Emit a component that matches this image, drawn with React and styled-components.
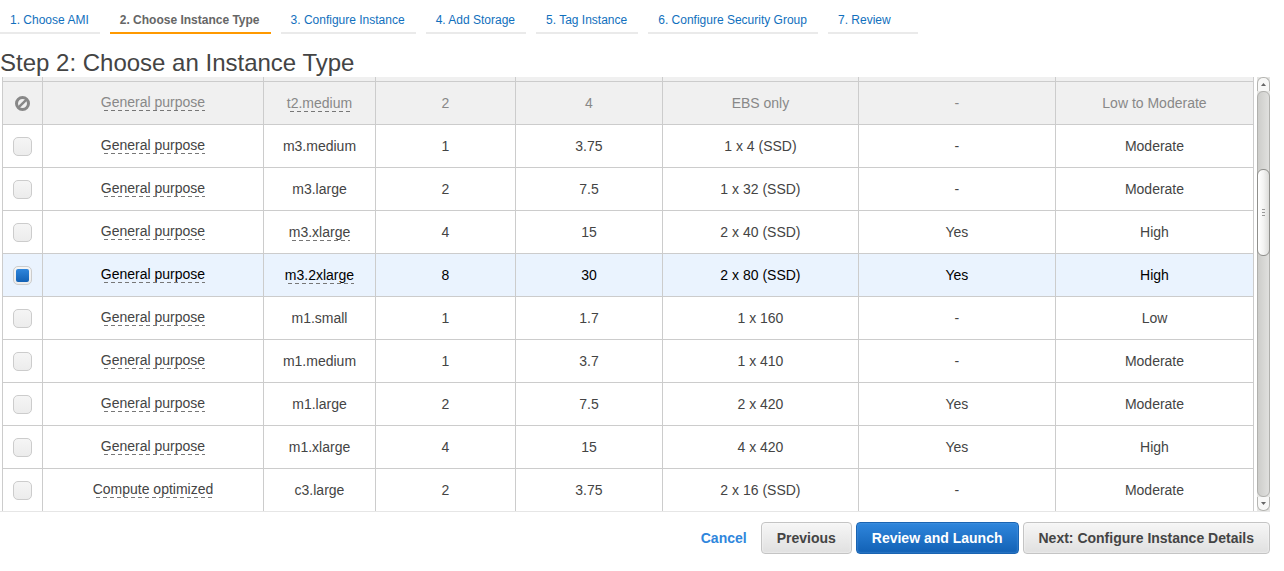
import React from 'react';
import styled, { createGlobalStyle, css } from 'styled-components';

const GlobalStyle = createGlobalStyle`
  * {
    box-sizing: border-box;
  }

  body {
    margin: 0;
    background: #fff;
    color: #444;
    font-family: "Liberation Sans", Arial, Helvetica, sans-serif;
    font-size: 14px;
  }
`;

const Page = styled.main`
  padding-right: 14px;
`;

const Steps = styled.nav`
  display: flex;
  gap: 10px;
  padding-top: 8px;
`;

const Step = styled.a`
  min-width: 90px;
  padding: 5px 11px 5px 10px;
  border-bottom: 2px solid ${props => (props.$current ? '#ff9900' : '#eaeaea')};
  color: ${props => (props.$current ? '#666' : '#1170bd')};
  font-size: 12px;
  font-weight: ${props => (props.$current ? 'bold' : 'normal')};
  line-height: 14px;
  text-decoration: none;
  white-space: nowrap;
`;

const Title = styled.h1`
  margin: 0;
  padding-top: 15px;
  font-size: 24px;
  font-weight: normal;
  line-height: 28px;
`;

const Pane = styled.section`
  display: flex;
  gap: 3px;
  padding-left: 2px;
  border-bottom: 1px solid #e6e6e6;
`;

const Table = styled.table`
  flex: 1;
  width: 0;
  table-layout: fixed;
  border-collapse: separate;
  border-spacing: 0;
  border-left: 1px solid #ccc;
`;

const Cell = styled.td`
  height: 43px;
  padding: 0;
  border-right: 1px solid #ccc;
  border-bottom: 1px solid #ccc;
  line-height: 16px;
  text-align: center;
  vertical-align: middle;
`;

const FamilyCell = styled(Cell)`
  padding-bottom: 2px;
`;

const Row = styled.tr`
  ${props => props.$disabled && css`
    background: #f0f0f0;
    color: #888;
  `}
  ${props => props.$selected && css`
    background: #eaf3fe;
    color: #000;
  `}

  &:last-child ${Cell} {
    height: 42px;
    border-bottom: 0;
  }
`;

const EdgeCell = styled(Cell)`
  height: 5px;
`;

const Hint = styled.span`
  display: inline-block;
  padding-bottom: 1px;
  background: repeating-linear-gradient(90deg, transparent 0 3px, #777 3px 7px) bottom / 100% 1px no-repeat;
`;

const Check = styled.input`
  appearance: none;
  display: block;
  width: 19px;
  height: 19px;
  margin: 0 auto;
  padding: 2px;
  border: 1px solid #ccc;
  border-radius: 5px;
  background: linear-gradient(#f5f5f5, #ececec);

  &:checked::before {
    content: "";
    display: block;
    height: 13px;
    border-radius: 2px;
    background: linear-gradient(#2f86dc, #1261b5);
  }
`;

const BanIcon = styled.svg`
  display: block;
  margin: 0 auto;
`;

const Scrollbar = styled.div`
  display: flex;
  flex-direction: column;
  width: 13px;
  background: #e6e6e4;
`;

const ArrowButton = styled.button`
  display: flex;
  align-items: center;
  justify-content: center;
  height: 14px;
  padding: 0;
  border: 1px solid #b5b5b2;
  border-width: ${props => (props.$down ? '0 1px 1px' : '1px 1px 0')};
  border-radius: ${props => (props.$down ? '0 0 6px 6px' : '6px 6px 0 0')};
  background: #f8f8f7;
`;

const Groove = styled.div`
  flex: 1;
  display: flex;
  flex-direction: column;
  border: 1px solid #b0b0ad;
  border-radius: 6px;
  background: linear-gradient(90deg, #cdcdca, #e0e0de);
`;

const Track = styled.div`
  flex: ${props => props.$share};
`;

const Thumb = styled.div`
  display: flex;
  flex-direction: column;
  align-items: center;
  justify-content: center;
  gap: 2px;
  height: 87px;
  margin: 0 -1px;
  border: 1px solid #8f8f8c;
  border-radius: 6px;
  background: linear-gradient(90deg, #fff, #f3f3f2 50%, #dcdcda);
`;

const Grip = styled.span`
  width: 3px;
  height: 1px;
  background: #999;
`;

const Footer = styled.footer`
  display: flex;
  align-items: center;
  justify-content: flex-end;
  gap: 4px;
  padding-top: 10px;
`;

const Cancel = styled.a`
  margin-right: 10px;
  color: #2f86dc;
  font-weight: bold;
  text-decoration: none;
`;

const Button = styled.button`
  height: 32px;
  padding: 0 15px;
  border: 1px solid ${props => (props.$primary ? '#1a64b2' : '#c4c4c4')};
  border-radius: 4px;
  background: ${props => (props.$primary
    ? 'linear-gradient(#2f86dc, #1261b5)'
    : 'linear-gradient(#f6f6f6, #e0e0e0)')};
  box-shadow: inset 0 0 2px ${props => (props.$primary ? '#5ba0e4' : '#fff')};
  color: ${props => (props.$primary ? '#fff' : '#444')};
  font: bold 14px "Liberation Sans", Arial, Helvetica, sans-serif;
`;

const steps = [
  '1. Choose AMI',
  '2. Choose Instance Type',
  '3. Configure Instance',
  '4. Add Storage',
  '5. Tag Instance',
  '6. Configure Security Group',
  '7. Review'
];

const columns = [40, 221, 112, 140, 147, 196, 197, 198];
const total = columns.reduce((sum, width) => sum + width, 0);

const instances = [
  { family: 'General purpose', type: 't2.medium', cpus: '2', memory: '4', storage: 'EBS only', ebs: '-', network: 'Low to Moderate', hint: true, disabled: true },
  { family: 'General purpose', type: 'm3.medium', cpus: '1', memory: '3.75', storage: '1 x 4 (SSD)', ebs: '-', network: 'Moderate' },
  { family: 'General purpose', type: 'm3.large', cpus: '2', memory: '7.5', storage: '1 x 32 (SSD)', ebs: '-', network: 'Moderate' },
  { family: 'General purpose', type: 'm3.xlarge', cpus: '4', memory: '15', storage: '2 x 40 (SSD)', ebs: 'Yes', network: 'High', hint: true },
  { family: 'General purpose', type: 'm3.2xlarge', cpus: '8', memory: '30', storage: '2 x 80 (SSD)', ebs: 'Yes', network: 'High', hint: true },
  { family: 'General purpose', type: 'm1.small', cpus: '1', memory: '1.7', storage: '1 x 160', ebs: '-', network: 'Low' },
  { family: 'General purpose', type: 'm1.medium', cpus: '1', memory: '3.7', storage: '1 x 410', ebs: '-', network: 'Moderate' },
  { family: 'General purpose', type: 'm1.large', cpus: '2', memory: '7.5', storage: '2 x 420', ebs: 'Yes', network: 'Moderate' },
  { family: 'General purpose', type: 'm1.xlarge', cpus: '4', memory: '15', storage: '4 x 420', ebs: 'Yes', network: 'High' },
  { family: 'Compute optimized', type: 'c3.large', cpus: '2', memory: '3.75', storage: '2 x 16 (SSD)', ebs: '-', network: 'Moderate' }
];

function InstanceRow({ item, selected, onSelect }) {
  return (
    <Row $disabled={item.disabled} $selected={selected}>
      <Cell>
        {item.disabled ? (
          <BanIcon width="15" height="15" viewBox="0 0 15 15" aria-hidden="true">
            <circle cx="7.5" cy="7.5" r="6" fill="none" stroke="#888" strokeWidth="3" />
            <path d="M3.8 11.2 11.2 3.8" stroke="#888" strokeWidth="2.4" />
          </BanIcon>
        ) : (
          <Check
            type="checkbox"
            aria-label={item.type}
            checked={selected}
            onChange={() => onSelect(item.type)}
          />
        )}
      </Cell>
      <FamilyCell><Hint>{item.family}</Hint></FamilyCell>
      <Cell>{item.hint ? <Hint>{item.type}</Hint> : item.type}</Cell>
      <Cell>{item.cpus}</Cell>
      <Cell>{item.memory}</Cell>
      <Cell>{item.storage}</Cell>
      <Cell>{item.ebs}</Cell>
      <Cell>{item.network}</Cell>
    </Row>
  );
}

function PaneScrollbar() {
  return (
    <Scrollbar>
      <ArrowButton type="button" aria-label="Scroll up">
        <svg width="5" height="3" viewBox="0 0 5 3"><path d="M0 3 2.5 0 5 3Z" fill="#666" /></svg>
      </ArrowButton>
      <Groove>
        <Track $share={77} />
        <Thumb>
          <Grip />
          <Grip />
          <Grip />
        </Thumb>
        <Track $share={240} />
      </Groove>
      <ArrowButton type="button" aria-label="Scroll down" $down>
        <svg width="5" height="3" viewBox="0 0 5 3"><path d="M0 0 2.5 3 5 0Z" fill="#666" /></svg>
      </ArrowButton>
    </Scrollbar>
  );
}

export default function App() {
  const [selected, setSelected] = React.useState('m3.2xlarge');

  return (
    <Page>
      <GlobalStyle />
      <Steps>
        {steps.map((label, index) => (
          <Step key={label} href="#" $current={index === 1}>{label}</Step>
        ))}
      </Steps>
      <Title>Step 2: Choose an Instance Type</Title>
      <Pane>
        <Table>
          <colgroup>
            {columns.map((width, index) => (
              <col key={index} style={{ width: `${(width / total) * 100}%` }} />
            ))}
          </colgroup>
          <tbody>
            <Row $disabled>
              {columns.map((width, index) => <EdgeCell key={index} />)}
            </Row>
            {instances.map(item => (
              <InstanceRow
                key={item.type}
                item={item}
                selected={item.type === selected}
                onSelect={setSelected}
              />
            ))}
          </tbody>
        </Table>
        <PaneScrollbar />
      </Pane>
      <Footer>
        <Cancel href="#">Cancel</Cancel>
        <Button type="button">Previous</Button>
        <Button type="button" $primary>Review and Launch</Button>
        <Button type="button">Next: Configure Instance Details</Button>
      </Footer>
    </Page>
  );
}
